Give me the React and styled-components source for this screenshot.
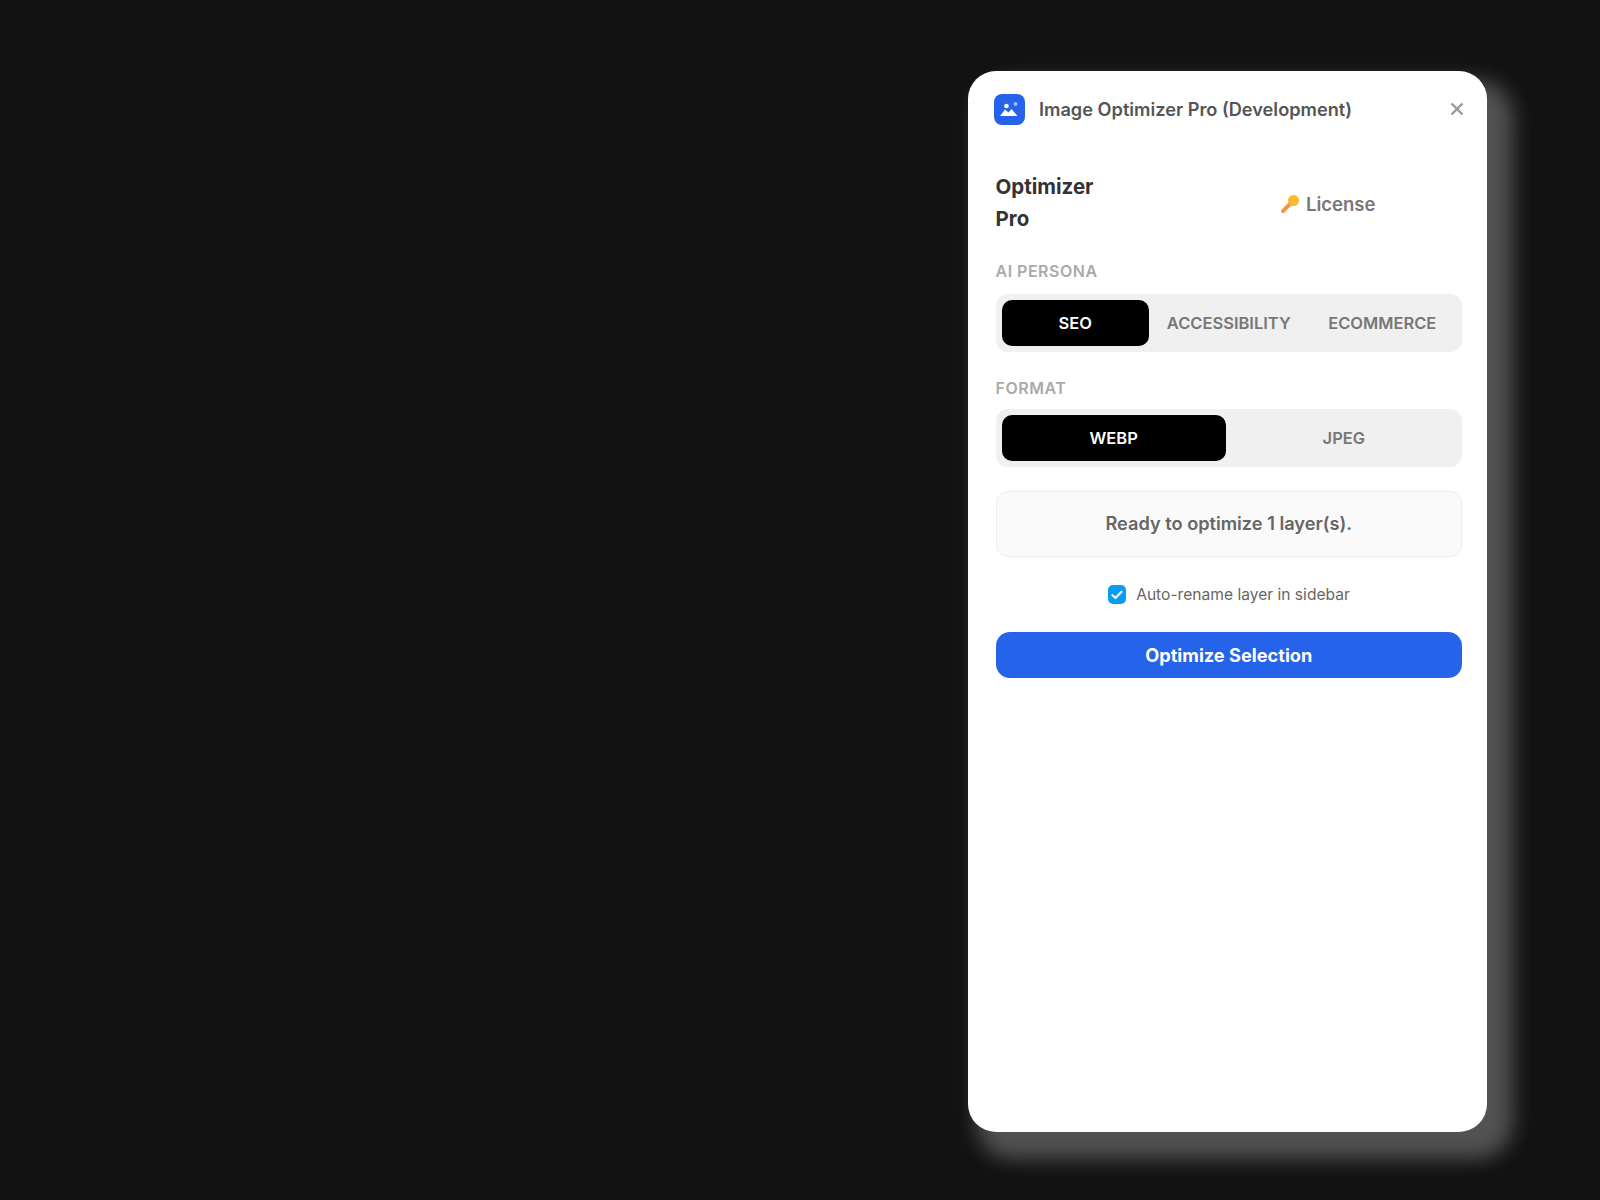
import React from 'react';
import styled, { createGlobalStyle } from 'styled-components';

const GlobalStyle = createGlobalStyle`
  html, body {
    margin: 0;
    padding: 0;
    background: #121212;
  }
  body {
    font-family: Inter, "Liberation Sans", sans-serif;
  }
`;

const Page = styled.div`
  min-height: 1200px;
  box-sizing: border-box;
  display: flex;
  justify-content: flex-end;
  align-items: flex-start;
  padding: 71px 113px 0 0;
`;

const Window = styled.div`
  width: 519px;
  height: 1061px;
  box-sizing: border-box;
  background: #fff;
  border-radius: 28px;
  box-shadow: 17px 18px 20px 9px rgba(255, 255, 255, 0.27);
  padding: 0 25px 0 27.5px;
  display: flex;
  flex-direction: column;
`;

const TitleBar = styled.header`
  height: 76px;
  margin-left: -2px;
  display: flex;
  align-items: center;
  gap: 14.5px;
`;

const AppIcon = styled.div`
  width: 31px;
  height: 31px;
  border-radius: 8px;
  background: #2563eb;
  display: flex;
  align-items: center;
  justify-content: center;
`;

const WindowTitle = styled.div`
  flex: 1;
  font-size: 18.2px;
  font-weight: 600;
  color: #555;
`;

const CloseButton = styled.button`
  border: 0;
  background: none;
  padding: 0;
  margin-right: -2px;
  display: flex;
  color: #999;
`;

const BrandRow = styled.div`
  margin-top: 24px;
  display: flex;
  align-items: center;
`;

const Brand = styled.h1`
  width: 284.5px;
  margin: 0;
  font-size: 20.5px;
  font-weight: 700;
  line-height: 32px;
  color: #333;
`;

const LicenseLink = styled.div`
  display: flex;
  align-items: center;
  gap: 6px;
  padding-top: 1px;
  font-size: 18.5px;
  font-weight: 600;
  color: #777;
`;

const Label = styled.div`
  margin-top: ${props => props.$top}px;
  margin-bottom: ${props => props.$bottom}px;
  font-size: 16px;
  font-weight: 600;
  letter-spacing: 0.5px;
  line-height: 20px;
  color: #aaa;
`;

const Segmented = styled.div`
  height: 58px;
  box-sizing: border-box;
  padding: 6px;
  display: flex;
  gap: 6px;
  background: #f0f0f0;
  border-radius: 12px;
`;

const Segment = styled.button`
  flex: 1 1 0;
  padding: 0;
  border: 0;
  border-radius: 10px;
  font-family: inherit;
  font-size: 16.5px;
  font-weight: 600;
  white-space: nowrap;
  background: ${props => (props.$active ? '#000' : 'transparent')};
  color: ${props => (props.$active ? '#fff' : '#777')};
`;

const StatusBox = styled.div`
  margin-top: 24px;
  height: 66px;
  box-sizing: border-box;
  padding-bottom: 2px;
  display: flex;
  align-items: center;
  justify-content: center;
  background: #fafafa;
  border: 1px solid #eee;
  border-radius: 12px;
  font-size: 18.2px;
  font-weight: 600;
  color: #666;
`;

const CheckRow = styled.label`
  margin-top: 28px;
  display: flex;
  align-items: center;
  justify-content: center;
  gap: 10px;
  font-size: 15.6px;
  color: #666;
`;

const CheckBox = styled.span`
  width: 18.5px;
  height: 18.5px;
  border-radius: 5px;
  background: #0a9bf5;
  display: flex;
  align-items: center;
  justify-content: center;
`;

const PrimaryButton = styled.button`
  margin-top: 28px;
  height: 46px;
  padding-bottom: 2px;
  border: 0;
  border-radius: 14px;
  background: #2563eb;
  color: #fff;
  font-family: inherit;
  font-size: 18.2px;
  font-weight: 700;
`;

const ImageGlyph = () => (
  <svg width="21" height="16" viewBox="0 0 21 16" fill="#fff">
    <circle cx="7.5" cy="5" r="2.3" />
    <circle cx="16.5" cy="3" r="2" fill="#9db8f5" />
    <path d="M1 15 L6 8.5 L9.5 11.5 L12.5 8 L18.5 15 Z" />
  </svg>
);

const CloseGlyph = () => (
  <svg width="14" height="14" viewBox="0 0 14 14" stroke="currentColor" strokeWidth="2.4" fill="none">
    <path d="M1.5 1.5 L12.5 12.5 M12.5 1.5 L1.5 12.5" />
  </svg>
);

const KeyGlyph = () => (
  <svg width="20" height="20" viewBox="0 0 20 20">
    <path d="M11 9 L3 17" stroke="#ee9a45" strokeWidth="4" strokeLinecap="round" />
    <circle cx="13.5" cy="6.5" r="5.5" fill="#fbb92f" />
  </svg>
);

const CheckGlyph = () => (
  <svg width="12" height="10" viewBox="0 0 12 10" stroke="#fff" strokeWidth="2.2" fill="none" strokeLinecap="round" strokeLinejoin="round">
    <path d="M1.5 5.2 L4.5 8 L10.5 1.8" />
  </svg>
);

const App = () => {
  return (
    <Page>
      <GlobalStyle />
      <Window>
        <TitleBar>
          <AppIcon><ImageGlyph /></AppIcon>
          <WindowTitle>Image Optimizer Pro (Development)</WindowTitle>
          <CloseButton><CloseGlyph /></CloseButton>
        </TitleBar>
        <BrandRow>
          <Brand>Optimizer<br />Pro</Brand>
          <LicenseLink><KeyGlyph />License</LicenseLink>
        </BrandRow>
        <Label $top={26} $bottom={13}>AI PERSONA</Label>
        <Segmented>
          <Segment $active>SEO</Segment>
          <Segment>ACCESSIBILITY</Segment>
          <Segment>ECOMMERCE</Segment>
        </Segmented>
        <Label $top={26} $bottom={11}>FORMAT</Label>
        <Segmented>
          <Segment $active>WEBP</Segment>
          <Segment>JPEG</Segment>
        </Segmented>
        <StatusBox>Ready to optimize 1 layer(s).</StatusBox>
        <CheckRow><CheckBox><CheckGlyph /></CheckBox>Auto-rename layer in sidebar</CheckRow>
        <PrimaryButton>Optimize Selection</PrimaryButton>
      </Window>
    </Page>
  );
};

export default App;
